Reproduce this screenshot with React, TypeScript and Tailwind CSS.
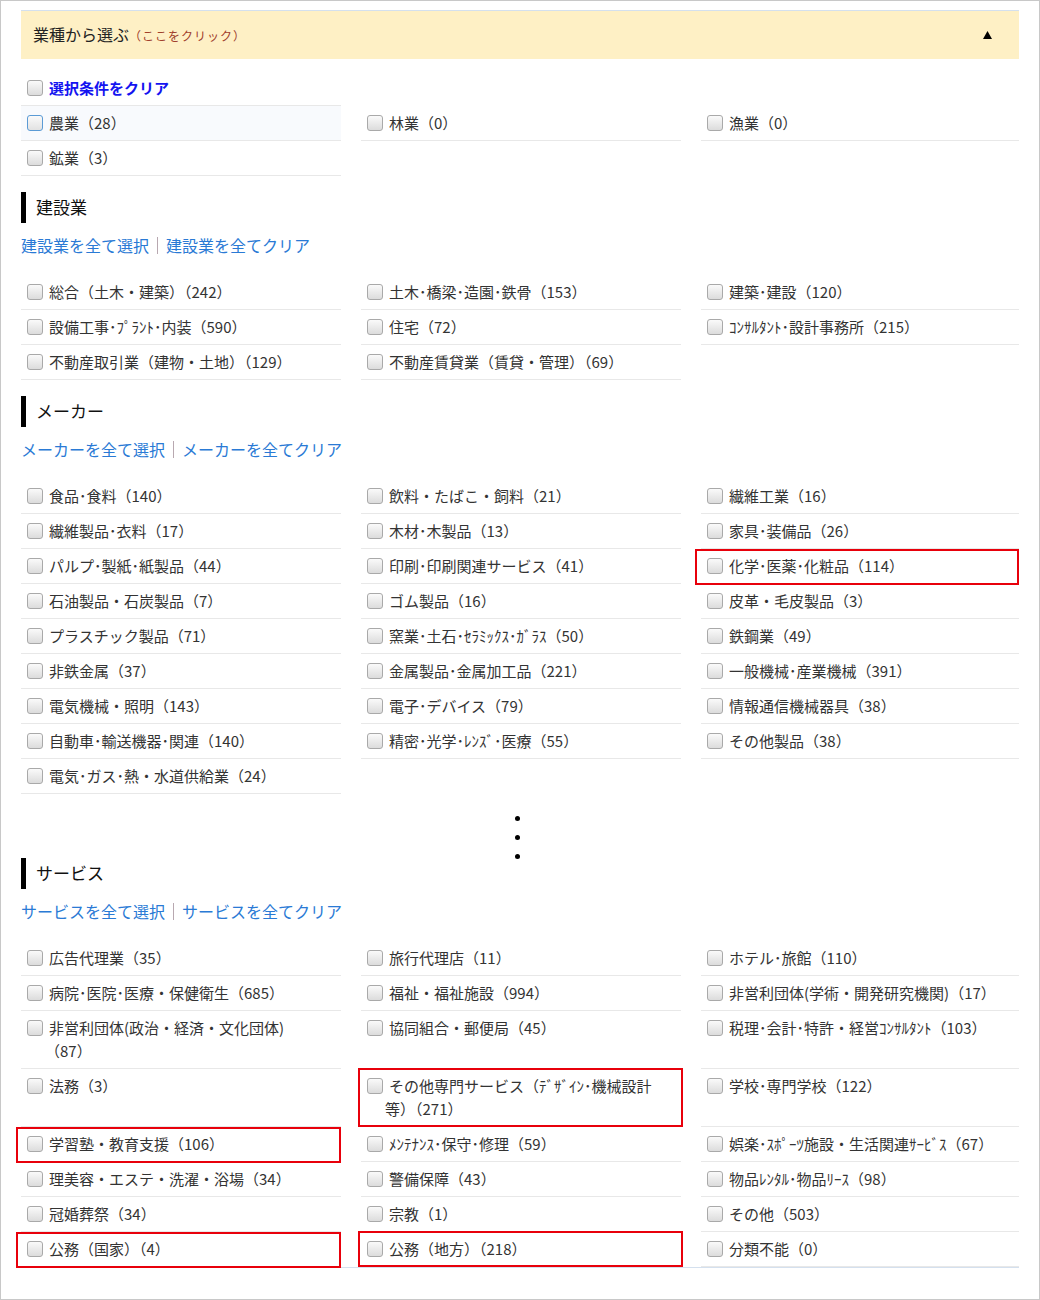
import React from "react";

type Item = { t: string; box?: string; hl?: boolean };

const BOX1 = "absolute -left-[5px] right-0 top-0 -bottom-[2px] border-2 border-[#e8000b] pointer-events-none";
const BOX2 = "absolute -left-[3px] -right-[2px] -top-[1px] -bottom-[1px] border-2 border-[#e8000b] pointer-events-none";
const BOX3 = "absolute -left-[6px] right-0 top-0 -bottom-[2px] border-2 border-[#e8000b] pointer-events-none";

const construction: Item[] = [
  { t: "総合（土木・建築）（242）" },
  { t: "土木･橋梁･造園･鉄骨（153）" },
  { t: "建築･建設（120）" },
  { t: "設備工事･ﾌﾟﾗﾝﾄ･内装（590）" },
  { t: "住宅（72）" },
  { t: "ｺﾝｻﾙﾀﾝﾄ･設計事務所（215）" },
  { t: "不動産取引業（建物・土地）（129）" },
  { t: "不動産賃貸業（賃貸・管理）（69）" },
];

const maker: Item[] = [
  { t: "食品･食料（140）" },
  { t: "飲料・たばこ・飼料（21）" },
  { t: "繊維工業（16）" },
  { t: "繊維製品･衣料（17）" },
  { t: "木材･木製品（13）" },
  { t: "家具･装備品（26）" },
  { t: "パルプ･製紙･紙製品（44）" },
  { t: "印刷･印刷関連サービス（41）" },
  { t: "化学･医薬･化粧品（114）", box: BOX3 },
  { t: "石油製品・石炭製品（7）" },
  { t: "ゴム製品（16）" },
  { t: "皮革・毛皮製品（3）" },
  { t: "プラスチック製品（71）" },
  { t: "窯業･土石･ｾﾗﾐｯｸｽ･ｶﾞﾗｽ（50）" },
  { t: "鉄鋼業（49）" },
  { t: "非鉄金属（37）" },
  { t: "金属製品･金属加工品（221）" },
  { t: "一般機械･産業機械（391）" },
  { t: "電気機械・照明（143）" },
  { t: "電子･デバイス（79）" },
  { t: "情報通信機械器具（38）" },
  { t: "自動車･輸送機器･関連（140）" },
  { t: "精密･光学･ﾚﾝｽﾞ･医療（55）" },
  { t: "その他製品（38）" },
  { t: "電気･ガス･熱・水道供給業（24）" },
];

const service: Item[] = [
  { t: "広告代理業（35）" },
  { t: "旅行代理店（11）" },
  { t: "ホテル･旅館（110）" },
  { t: "病院･医院･医療・保健衛生（685）" },
  { t: "福祉・福祉施設（994）" },
  { t: "非営利団体(学術・開発研究機関)（17）" },
  { t: "非営利団体(政治・経済・文化団体)\n（87）" },
  { t: "協同組合・郵便局（45）" },
  { t: "税理･会計･特許・経営ｺﾝｻﾙﾀﾝﾄ（103）" },
  { t: "法務（3）" },
  { t: "その他専門サービス（ﾃﾞｻﾞｲﾝ･機械設計\n等）（271）", box: BOX2 },
  { t: "学校･専門学校（122）" },
  { t: "学習塾・教育支援（106）", box: BOX1 },
  { t: "ﾒﾝﾃﾅﾝｽ･保守･修理（59）" },
  { t: "娯楽･ｽﾎﾟｰﾂ施設・生活関連ｻｰﾋﾞｽ（67）" },
  { t: "理美容・エステ・洗濯・浴場（34）" },
  { t: "警備保障（43）" },
  { t: "物品ﾚﾝﾀﾙ･物品ﾘｰｽ（98）" },
  { t: "冠婚葬祭（34）" },
  { t: "宗教（1）" },
  { t: "その他（503）" },
  { t: "公務（国家）（4）", box: BOX1 },
  { t: "公務（地方）（218）", box: BOX2 },
  { t: "分類不能（0）" },
];

function Check({ hl }: { hl?: boolean }) {
  return (
    <span
      className={
        hl
          ? "inline-block w-4 h-4 mr-[6px] align-[-2px] rounded-[3px] border border-[#5b9bd5] bg-linear-to-b from-[#fafafa] to-[#e2e2e2] indent-0"
          : "inline-block w-4 h-4 mr-[6px] align-[-2px] rounded-[3px] border border-[#a9a9a9] bg-linear-to-b from-[#fafafa] to-[#dcdcdc] indent-0"
      }
    />
  );
}

function Row({ item }: { item: Item }) {
  return (
    <div
      className={
        item.hl
          ? "relative whitespace-pre-line border-b border-[#e8e8e8] bg-[#f8fafd] pt-[5px] pb-[6px] pl-[24px] -indent-[18px] text-[15px] leading-[23px] text-[#333]"
          : "relative whitespace-pre-line border-b border-[#e8e8e8] pt-[5px] pb-[6px] pl-[24px] -indent-[18px] text-[15px] leading-[23px] text-[#333]"
      }
    >
      <Check hl={item.hl} />
      {item.t}
      {item.box ? <span className={item.box} /> : null}
    </div>
  );
}

function Section({ title, items }: { title: string; items: Item[] }) {
  return (
    <div>
      <div className="border-l-[5px] border-black pl-[10px] h-[31px] leading-[29px] text-[17px] text-[#111]">
        {title}
      </div>
      <div className="mt-[10px] flex items-center text-[16px] leading-[24px] text-[#2a7ad5]">
        <span>{title}を全て選択</span>
        <span className="inline-block mx-[8px] h-[17px] border-l border-[#b8a8b0]" />
        <span>{title}を全てクリア</span>
      </div>
      <div className="mt-[18px] grid grid-cols-[320px_320px_1fr] gap-x-5">
        {items.map((it, i) => (
          <Row key={i} item={it} />
        ))}
      </div>
    </div>
  );
}

export default function App() {
  return (
    <div
      className="w-[1040px] h-[1300px] border border-[#c8c8c8] bg-white px-5 pt-[9px]"
      style={{ fontFamily: '"Noto Sans CJK JP", "Noto Sans", sans-serif' }}
    >
      <div className="h-[49px] border-t border-[#d4e0ee] bg-[#fef0c5] flex items-center justify-between pl-3 pr-[27px]">
        <div className="flex items-baseline -mt-[2px]">
          <span className="text-[16px] text-[#222]">業種から選ぶ</span>
          <span className="text-[12px] text-[#a0402c] tracking-[1px]">（ここをクリック）</span>
        </div>
        <svg width="9" height="8" viewBox="0 0 9 8">
          <polygon points="4.5,0 9,8 0,8" fill="#000" />
        </svg>
      </div>

      <div className="border-b border-[#d4e0ee]">
        <div className="mt-3 grid grid-cols-[320px_320px_1fr] gap-x-5">
          <div className="relative border-b border-[#e8e8e8] pt-[5px] pb-[6px] pl-[24px] -indent-[18px] text-[15px] leading-[23px] font-bold text-[#1414f0]">
            <Check />
            選択条件をクリア
          </div>
          <div />
          <div />
          <Row item={{ t: "農業（28）", hl: true }} />
          <Row item={{ t: "林業（0）" }} />
          <Row item={{ t: "漁業（0）" }} />
          <Row item={{ t: "鉱業（3）" }} />
        </div>

        <div className="mt-4">
          <Section title="建設業" items={construction} />
        </div>
        <div className="mt-4">
          <Section title="メーカー" items={maker} />
        </div>

        <div className="pt-[22px] pr-[6px] flex flex-col items-center gap-[14px]">
          <span className="block w-[5px] h-[5px] rounded-full bg-black" />
          <span className="block w-[5px] h-[5px] rounded-full bg-black" />
          <span className="block w-[5px] h-[5px] rounded-full bg-black" />
        </div>

        <div className="-mt-[1px]">
          <Section title="サービス" items={service} />
        </div>
      </div>
    </div>
  );
}
